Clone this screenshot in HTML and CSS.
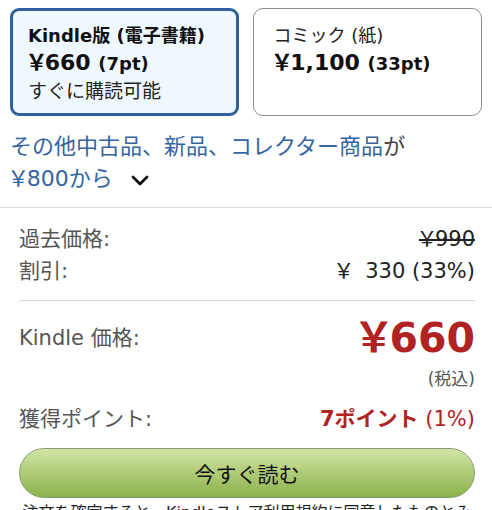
FILE: index.html
```html
<!DOCTYPE html>
<html>

<head>
  <meta charset="utf-8" />
  <title>Kindle 価格</title>
  <meta name="viewport" content="width=device-width, initial-scale=1" />
  <link rel="stylesheet" href="styles.css">
</head>

<body>
  <div class="formatos">
    <div class="formato seleccionado">
      <div class="formato-nombre">Kindle版 (電子書籍)</div>
      <div class="formato-precio">￥660 <span class="pt">(7pt)</span></div>
      <div class="formato-nota">すぐに購読可能</div>
    </div>
    <div class="formato">
      <div class="formato-nombre normal">コミック (紙)</div>
      <div class="formato-precio">￥1,100 <span class="pt">(33pt)</span></div>
    </div>
  </div>

  <div class="otros">
    <a class="enlace">その他中古品、新品、コレクター商品</a>が<br>
    <a class="enlace"><span class="yen">￥800</span>から</a>
    <svg class="chevron" width="20" height="12" viewBox="0 0 20 12">
      <path d="M3 2 L10 9 L17 2" fill="none" stroke="#111" stroke-width="2.8" stroke-linecap="round" stroke-linejoin="round" />
    </svg>
  </div>

  <div class="precios">
    <div class="fila">
      <span>過去価格:</span>
      <span class="tachado yen">￥990</span>
    </div>
    <div class="fila">
      <span>割引:</span>
      <span class="oscuro yen">￥&nbsp; 330 (33%)</span>
    </div>
    <div class="linea"></div>
    <div class="fila fila-kindle">
      <span>Kindle 価格:</span>
      <span class="precio-grande yen">￥660</span>
    </div>
    <div class="impuesto">(税込)</div>
    <div class="fila">
      <span>獲得ポイント:</span>
      <span class="rojo"><b>7ポイント</b> (1%)</span>
    </div>
    <button class="boton">今すぐ読む</button>
    <div class="aviso">注文を確定すると、Kindleストア利用規約に同意したものとみなされます</div>
  </div>
</body>

</html>
```

FILE: styles.css
```css
body {
  margin: 0;
  font-family: "DejaVu Sans", "Noto Sans CJK JP", sans-serif;
  color: #111;
  background: #fff;
  width: 492px;
  overflow: hidden;
}

/* proportional yen sign, as in the price labels */
.yen,
.formato-precio {
  font-feature-settings: "palt";
}

.formatos {
  display: flex;
  gap: 14px;
  padding: 8px 10px 0;
}

.formato {
  flex: 1;
  height: 108px;
  border: solid 1px #8d8d8d;
  border-radius: 10px;
  padding: 14px 0 0 20px;
  box-sizing: border-box;
}

.seleccionado {
  border: solid 3px #30609c;
  border-radius: 9px;
  background: #f0f8ff;
  padding: 12px 0 0 15px;
}

.formato-nombre {
  font-size: 18px;
  font-weight: bold;
  line-height: 26px;
}

.formato-nombre.normal {
  font-weight: normal;
  color: #222;
}

.formato-precio {
  font-size: 22px;
  font-weight: bold;
  line-height: 28px;
}

.pt {
  font-size: 18px;
}

.formato-nota {
  font-size: 19px;
  line-height: 27px;
  color: #222;
}

.otros {
  padding: 15px 10px 12px;
  font-size: 22px;
  line-height: 32px;
  color: #444;
  border-bottom: solid 1px #dcdcdc;
}

.enlace {
  color: #3564a2;
}

.chevron {
  margin-left: 10px;
  vertical-align: -1px;
}

.precios {
  padding: 15px 17px 0 19px;
}

.fila {
  display: flex;
  justify-content: space-between;
  align-items: center;
  font-size: 21px;
  line-height: 32px;
  color: #555;
}

.tachado {
  color: #222;
  text-decoration: line-through;
}

.oscuro {
  color: #222;
}

.linea {
  border-top: solid 1px #d8d8d8;
  margin: 13px 0 13px;
}

.fila-kindle {
  align-items: flex-start;
  line-height: 48px;
}

.precio-grande {
  color: #b12223;
  font-size: 41px;
  font-weight: bold;
}

.impuesto {
  text-align: right;
  font-size: 17px;
  line-height: 24px;
  color: #555;
  margin: 5px 0 12px;
}

.rojo {
  color: #b12223;
}

.boton {
  display: block;
  width: 100%;
  height: 50px;
  margin-top: 13px;
  border: solid 1px #8c9a78;
  border-radius: 25px;
  background: linear-gradient(#d1e5a6, #8db14a);
  font-family: "DejaVu Sans", "Noto Sans CJK JP", sans-serif;
  font-size: 21px;
  color: #111;
}

.aviso {
  margin-top: 4px;
  text-align: center;
  font-size: 16px;
  line-height: 22px;
  color: #222;
}
```
